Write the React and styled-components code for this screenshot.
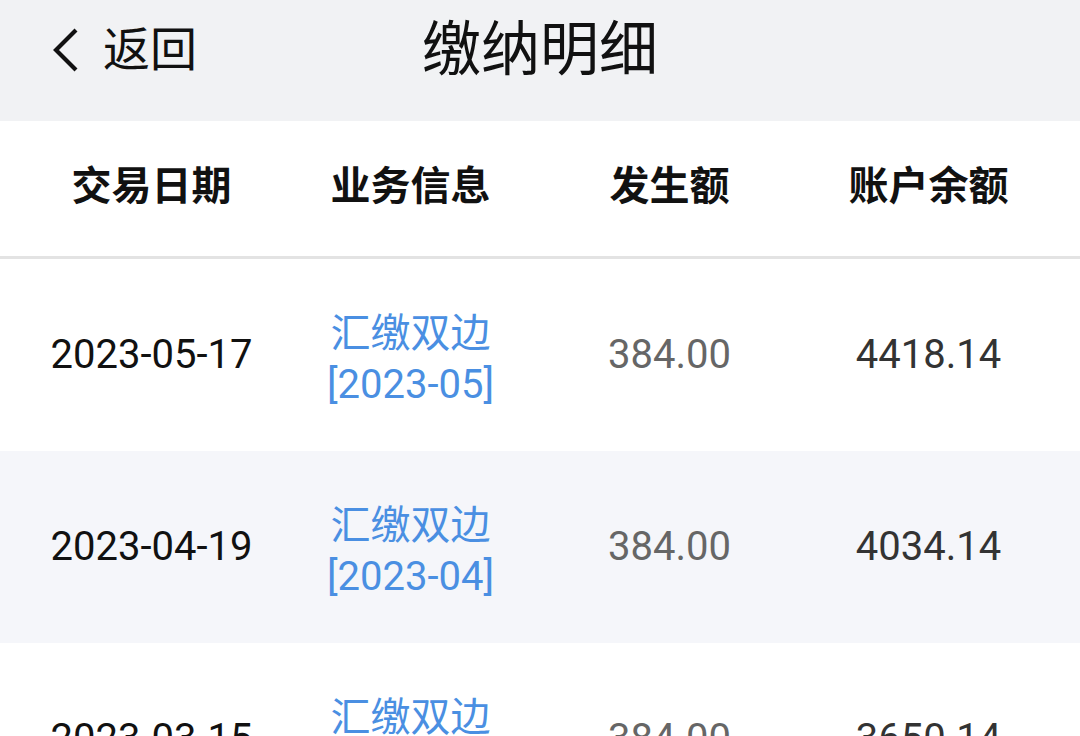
import React from "react";
import styled, { createGlobalStyle } from "styled-components";

const Global = createGlobalStyle`
  html, body { margin: 0; padding: 0; background: #ffffff; }
  body {
    font-family: Roboto, "Noto Sans CJK SC", "Noto Sans", sans-serif;
    -webkit-font-smoothing: antialiased;
  }
  * { box-sizing: border-box; }
`;

const Page = styled.div`
  width: 1080px;
  height: 736px;
  overflow: hidden;
  background: #ffffff;
`;

const NavBar = styled.header`
  height: 121px;
  background: #f1f2f4;
  display: grid;
  grid-template-columns: 1fr auto 1fr;
  align-items: center;
  padding: 0 0 22px 0;
`;

const Back = styled.div`
  display: flex;
  align-items: center;
  gap: 23px;
  padding-left: 52px;
  color: #111;
  font-size: 47px;
  line-height: 1;
`;

const Title = styled.h1`
  margin: 0;
  font-size: 59px;
  font-weight: 400;
  color: #111;
  line-height: 1;
`;

const Grid = styled.div`
  display: grid;
  grid-template-columns: repeat(4, 1fr);
  padding: 0 22px;
  align-items: center;
  justify-items: center;
`;

const HeadRow = styled(Grid)`
  height: 138px;
  border-bottom: 3px solid #e3e3e3;
  padding-bottom: 12px;
`;

const HeadCell = styled.div`
  font-size: 40px;
  font-weight: 700;
  color: #111;
`;

const Row = styled(Grid)`
  height: 192px;
  background: ${(p) => (p.$alt ? "#f5f6fa" : "#ffffff")};
`;

const Cell = styled.div`
  font-size: 40px;
  line-height: 50px;
  text-align: center;
  color: ${(p) => p.$color || "#111"};
`;

const LinkCell = styled(Cell)`
  line-height: 51px;
  margin-top: 8px;
  color: #4a8fe2;
`;

const rows = [
  { date: "2023-05-17", month: "2023-05", amount: "384.00", balance: "4418.14" },
  { date: "2023-04-19", month: "2023-04", amount: "384.00", balance: "4034.14" },
  { date: "2023-03-15", month: "2023-03", amount: "384.00", balance: "3650.14" },
];

export default function App() {
  return (
    <Page>
      <Global />
      <NavBar>
        <Back>
          <svg width="28" height="46" viewBox="0 0 28 46" fill="none">
            <polyline
              points="24,3 4,23 24,43"
              stroke="#111"
              strokeWidth="4.2"
              strokeLinecap="butt"
              strokeLinejoin="miter"
            />
          </svg>
          <span>返回</span>
        </Back>
        <Title>缴纳明细</Title>
        <div />
      </NavBar>
      <HeadRow>
        <HeadCell>交易日期</HeadCell>
        <HeadCell>业务信息</HeadCell>
        <HeadCell>发生额</HeadCell>
        <HeadCell>账户余额</HeadCell>
      </HeadRow>
      {rows.map((r, i) => (
        <Row key={r.date} $alt={i % 2 === 1}>
          <Cell>{r.date}</Cell>
          <LinkCell>
            汇缴双边
            <br />[{r.month}]
          </LinkCell>
          <Cell $color="#666666">{r.amount}</Cell>
          <Cell $color="#333333">{r.balance}</Cell>
        </Row>
      ))}
    </Page>
  );
}
